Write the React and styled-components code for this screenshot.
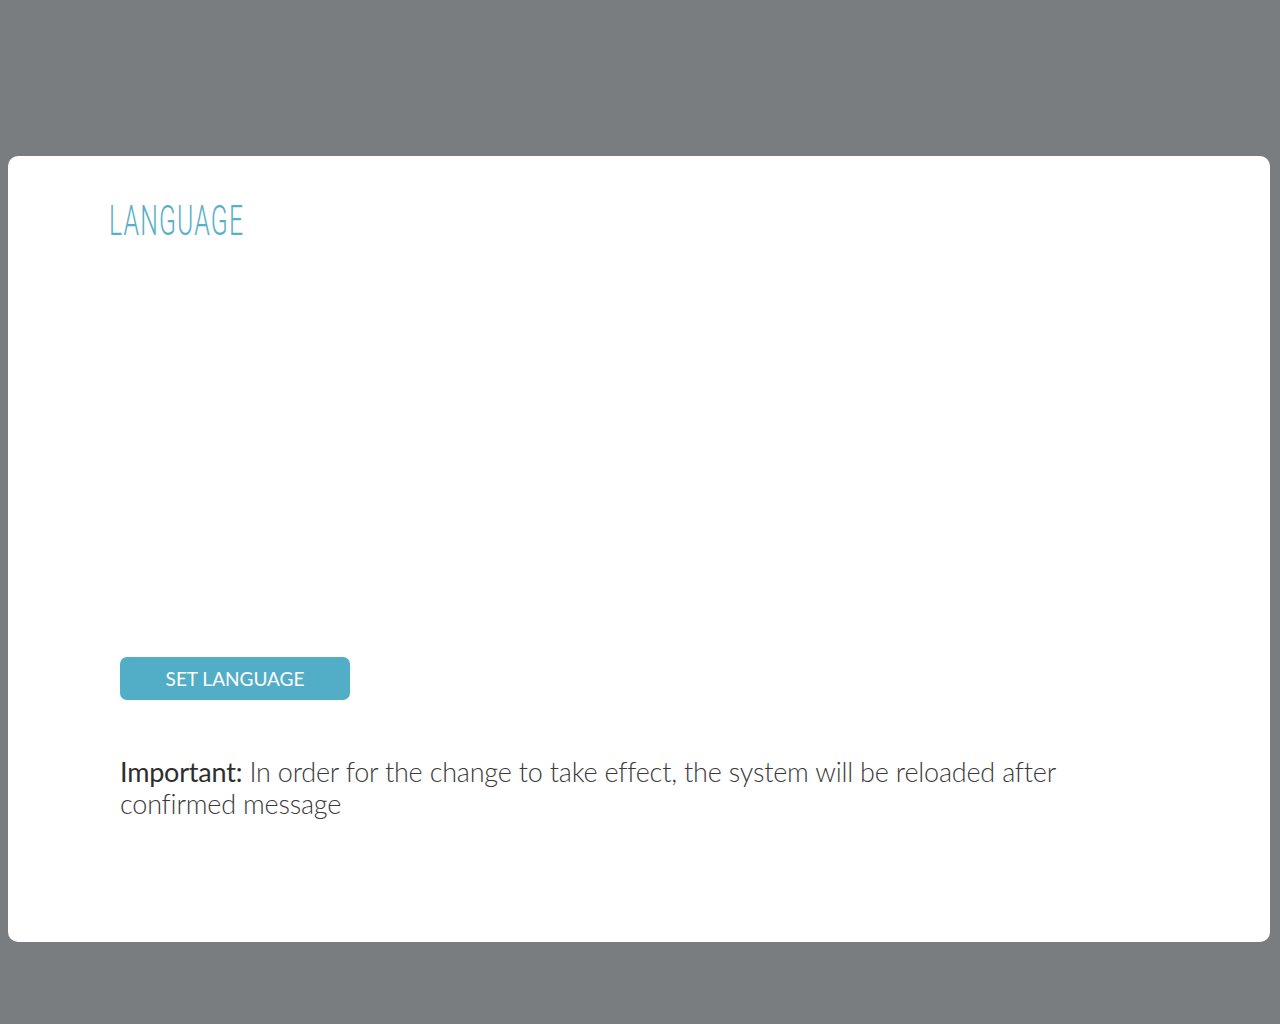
import React from "react";
import styled, { createGlobalStyle } from "styled-components";

const GlobalStyle = createGlobalStyle`
  html, body {
    margin: 0;
    padding: 0;
    background-color: #7a7d80;
  }
  #root {
    min-height: 1024px;
  }
`;

const Page = styled.div`
  display: flex;
  flex-direction: column;
  padding: 156px 10px 0 8px;
`;

const Card = styled.div`
  display: flex;
  flex-direction: column;
  height: 786px;
  box-sizing: border-box;
  background-color: #fff;
  border-radius: 10px;
  padding: 44px 100px 0 101px;
`;

const Title = styled.h1`
  margin: 0;
  font-family: "Roboto", "Liberation Sans", sans-serif;
  font-weight: 300;
  font-size: 42px;
  line-height: 42px;
  letter-spacing: 2px;
  color: #5aafc8;
  transform: scaleX(0.59);
  transform-origin: left center;
`;

const Body = styled.div`
  display: flex;
  flex-direction: column;
  align-items: flex-start;
  padding-left: 11px;
  margin-top: 415px;
`;

const Button = styled.button`
  width: 230px;
  height: 43px;
  border: none;
  border-radius: 7px;
  background-color: #52adc6;
  color: #fff;
  font-family: "Lato", "Liberation Sans", sans-serif;
  font-size: 19px;
  font-weight: 400;
  text-transform: uppercase;
  cursor: pointer;
`;

const Notice = styled.p`
  margin: 56px 0 0;
  max-width: 960px;
  font-family: "Lato", "Liberation Sans", sans-serif;
  font-weight: 300;
  font-size: 27px;
  line-height: 32px;
  letter-spacing: -0.2px;
  color: #3a3a3a;
`;

const Strong = styled.span`
  font-weight: 400;
  color: #2e2e2e;
`;

const App = () => {
  return (
    <>
      <GlobalStyle />
      <Page>
        <Card>
          <Title>LANGUAGE</Title>
          <Body>
            <Button>Set Language</Button>
            <Notice>
              <Strong>Important:</Strong> In order for the change to take
              effect, the system will be reloaded after confirmed message
            </Notice>
          </Body>
        </Card>
      </Page>
    </>
  );
};

export default App;
